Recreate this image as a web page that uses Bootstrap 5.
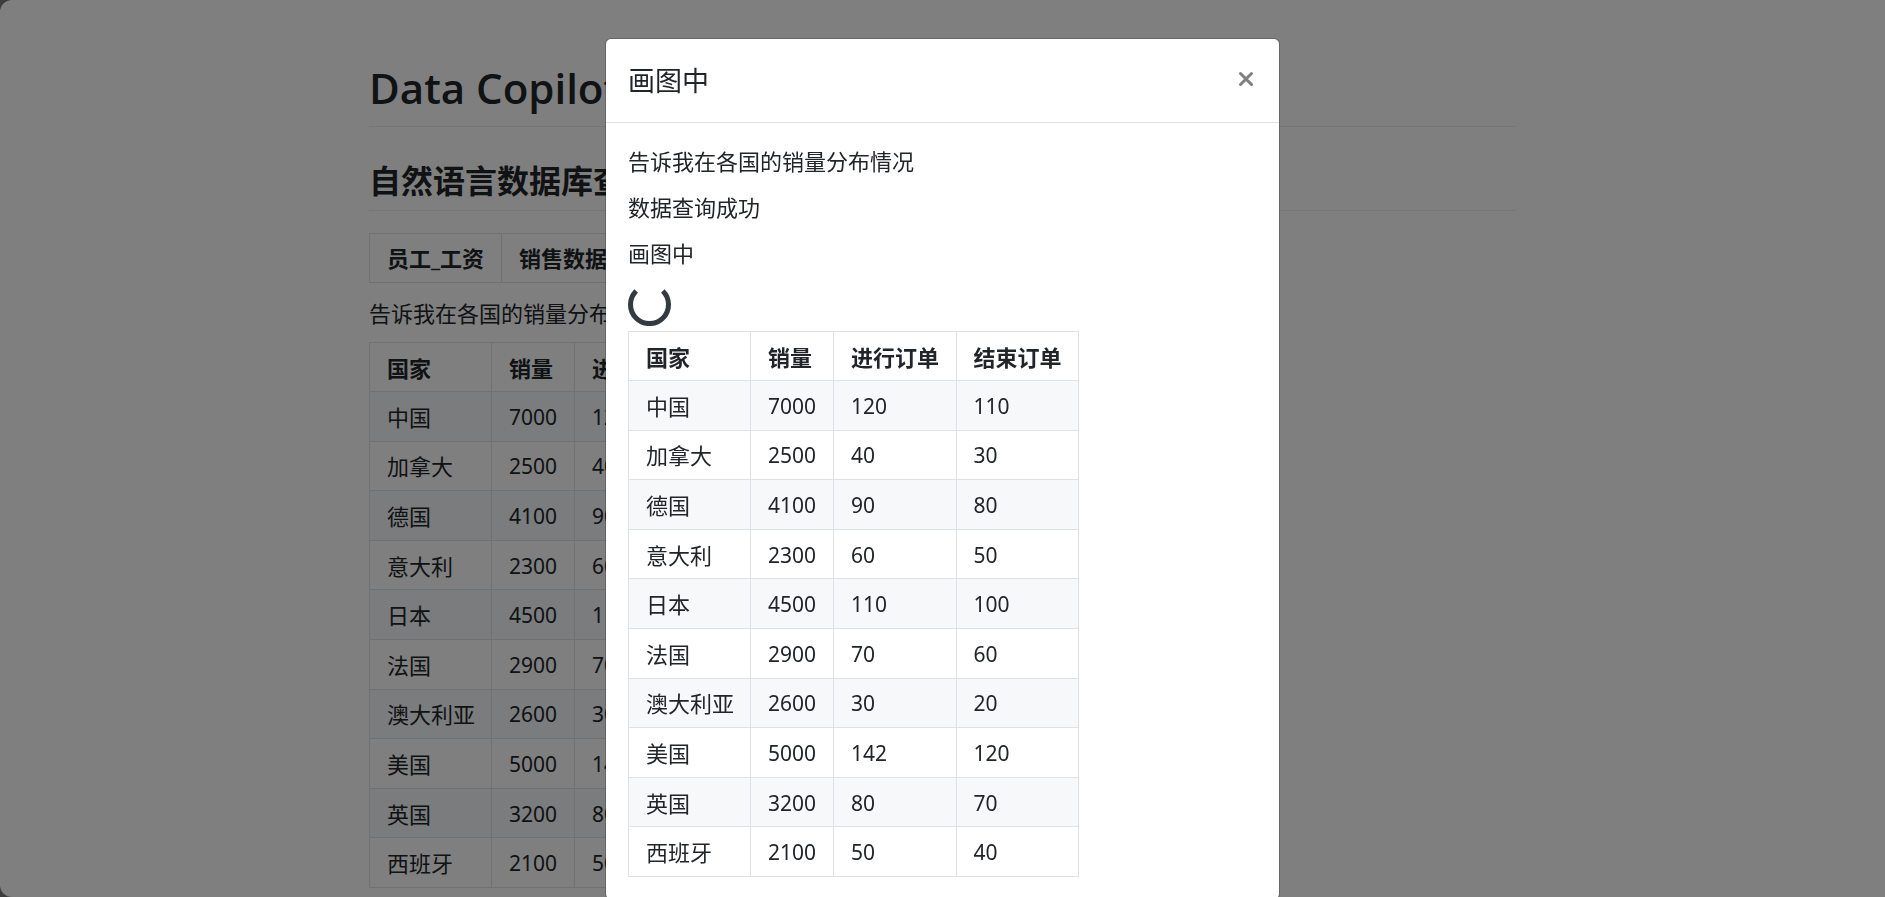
<!DOCTYPE html>
<html lang="zh-CN">
<head>
<meta charset="utf-8">
<meta name="viewport" content="width=device-width, initial-scale=1">
<title>Data Copilot</title>
<link rel="stylesheet" href="https://cdn.jsdelivr.net/npm/bootstrap@5.3.0/dist/css/bootstrap.min.css">
<script src="https://cdn.jsdelivr.net/npm/bootstrap@5.3.0/dist/js/bootstrap.bundle.min.js"></script>
<style>
  body {
    font-family: "Noto Sans", "Noto Sans CJK SC", sans-serif;
    font-size: 22px;
    line-height: 32px;
    color: #212529;
    background: #787878;
  }
  .app-page { background: #fff; border-radius: 12px 0 0 12px; }
  .app-main { max-width: 1147px; padding-top: 62px; }
  .app-title {
    font-family: "Open Sans", "Noto Sans", sans-serif;
    font-size: 42px; line-height: 52px; font-weight: 600;
    padding-bottom: 12px; margin-bottom: 34px;
    border-bottom: 1px solid #eaecef;
  }
  .app-subtitle {
    font-size: 32px; line-height: 40px; font-weight: 700;
    padding-bottom: 9px; margin-bottom: 22px;
    border-bottom: 1px solid #eaecef;
  }
  .line-text { margin-bottom: 14px; }
  .grid-table { width: auto; margin: 0; color: #212529; border-color: #dfe2e5; border-collapse: collapse; }
  .grid-table th, .grid-table td { padding: 8px 17px; border: 1px solid #dfe2e5; white-space: nowrap; line-height: 32px; }
  .grid-table tbody tr:nth-child(odd) { background: #f6f8fa; }
  .grid-table td + td { font-size: 21px; }
  .tabs-table { height: 50px; margin-bottom: 14px; }
  .query-text { margin-bottom: 13px; }
  .data-table { width: 451px; height: 546px; table-layout: fixed; }
  .data-table th { padding-top: 9px; padding-bottom: 7px; }
  .data-table td { padding-top: 8px; padding-bottom: 7px; }
  .data-table th:nth-child(1) { width: 122px; }
  .data-table th:nth-child(2) { width: 83px; }
  .query-dialog { max-width: 675px; margin-top: 38px; margin-bottom: 38px; }
  .query-dialog .modal-content { border-radius: 6px; border-color: rgba(0, 0, 0, .2); }
  .query-dialog .modal-header { padding: 22px 21px 21px 22px; border-color: #dee2e6; }
  .query-dialog .modal-title { font-size: 27px; line-height: 40px; font-weight: 400; }
  .query-dialog .modal-body { padding: 22px; }
  .close-x { color: #7f7f7f; line-height: 0; padding: 4px; margin-bottom: 4px; }
  .loader { margin-bottom: 5px; }
</style>
</head>
<body class="modal-open overflow-hidden">
<div class="app-page vh-100 overflow-hidden">
  <main class="app-main mx-auto">
    <h1 class="app-title">Data Copilot</h1>
    <h2 class="app-subtitle">自然语言数据库查询</h2>
    <table class="grid-table tabs-table">
      <thead><tr><th scope="col">员工_工资</th><th scope="col">销售数据</th></tr></thead>
    </table>
    <p class="query-text">告诉我在各国的销量分布情况</p>
    <table class="grid-table data-table">
      <thead><tr><th scope="col">国家</th><th scope="col">销量</th><th scope="col">进行订单</th><th scope="col">结束订单</th></tr></thead>
      <tbody>
        <tr><td>中国</td><td>7000</td><td>120</td><td>110</td></tr>
        <tr><td>加拿大</td><td>2500</td><td>40</td><td>30</td></tr>
        <tr><td>德国</td><td>4100</td><td>90</td><td>80</td></tr>
        <tr><td>意大利</td><td>2300</td><td>60</td><td>50</td></tr>
        <tr><td>日本</td><td>4500</td><td>110</td><td>100</td></tr>
        <tr><td>法国</td><td>2900</td><td>70</td><td>60</td></tr>
        <tr><td>澳大利亚</td><td>2600</td><td>30</td><td>20</td></tr>
        <tr><td>美国</td><td>5000</td><td>142</td><td>120</td></tr>
        <tr><td>英国</td><td>3200</td><td>80</td><td>70</td></tr>
        <tr><td>西班牙</td><td>2100</td><td>50</td><td>40</td></tr>
      </tbody>
    </table>
  </main>
</div>

<div class="modal-backdrop show"></div>
<div class="modal d-block overflow-hidden" tabindex="-1" role="dialog" aria-modal="true" aria-labelledby="dialogTitle">
  <div class="modal-dialog query-dialog">
    <div class="modal-content">
      <div class="modal-header">
        <h5 class="modal-title" id="dialogTitle">画图中</h5>
        <button type="button" class="close-x btn border-0" aria-label="Close">
          <svg width="16" height="16" viewBox="0 0 16 16" fill="none" stroke="currentColor" stroke-width="3" stroke-linecap="round"><path d="M2.5 2.5l11 11M13.5 2.5l-11 11"/></svg>
        </button>
      </div>
      <div class="modal-body">
        <p class="line-text">告诉我在各国的销量分布情况</p>
        <p class="line-text">数据查询成功</p>
        <p class="line-text">画图中</p>
        <svg class="loader d-block" width="43" height="43" viewBox="0 0 43 43" fill="none" stroke="#343a40" stroke-width="5" role="img" aria-label="画图中"><path d="M8.2 8A19 19 0 1 0 34.8 8"/></svg>
        <table class="grid-table data-table">
          <thead><tr><th scope="col">国家</th><th scope="col">销量</th><th scope="col">进行订单</th><th scope="col">结束订单</th></tr></thead>
          <tbody>
            <tr><td>中国</td><td>7000</td><td>120</td><td>110</td></tr>
            <tr><td>加拿大</td><td>2500</td><td>40</td><td>30</td></tr>
            <tr><td>德国</td><td>4100</td><td>90</td><td>80</td></tr>
            <tr><td>意大利</td><td>2300</td><td>60</td><td>50</td></tr>
            <tr><td>日本</td><td>4500</td><td>110</td><td>100</td></tr>
            <tr><td>法国</td><td>2900</td><td>70</td><td>60</td></tr>
            <tr><td>澳大利亚</td><td>2600</td><td>30</td><td>20</td></tr>
            <tr><td>美国</td><td>5000</td><td>142</td><td>120</td></tr>
            <tr><td>英国</td><td>3200</td><td>80</td><td>70</td></tr>
            <tr><td>西班牙</td><td>2100</td><td>50</td><td>40</td></tr>
          </tbody>
        </table>
      </div>
    </div>
  </div>
</div>
</body>
</html>
